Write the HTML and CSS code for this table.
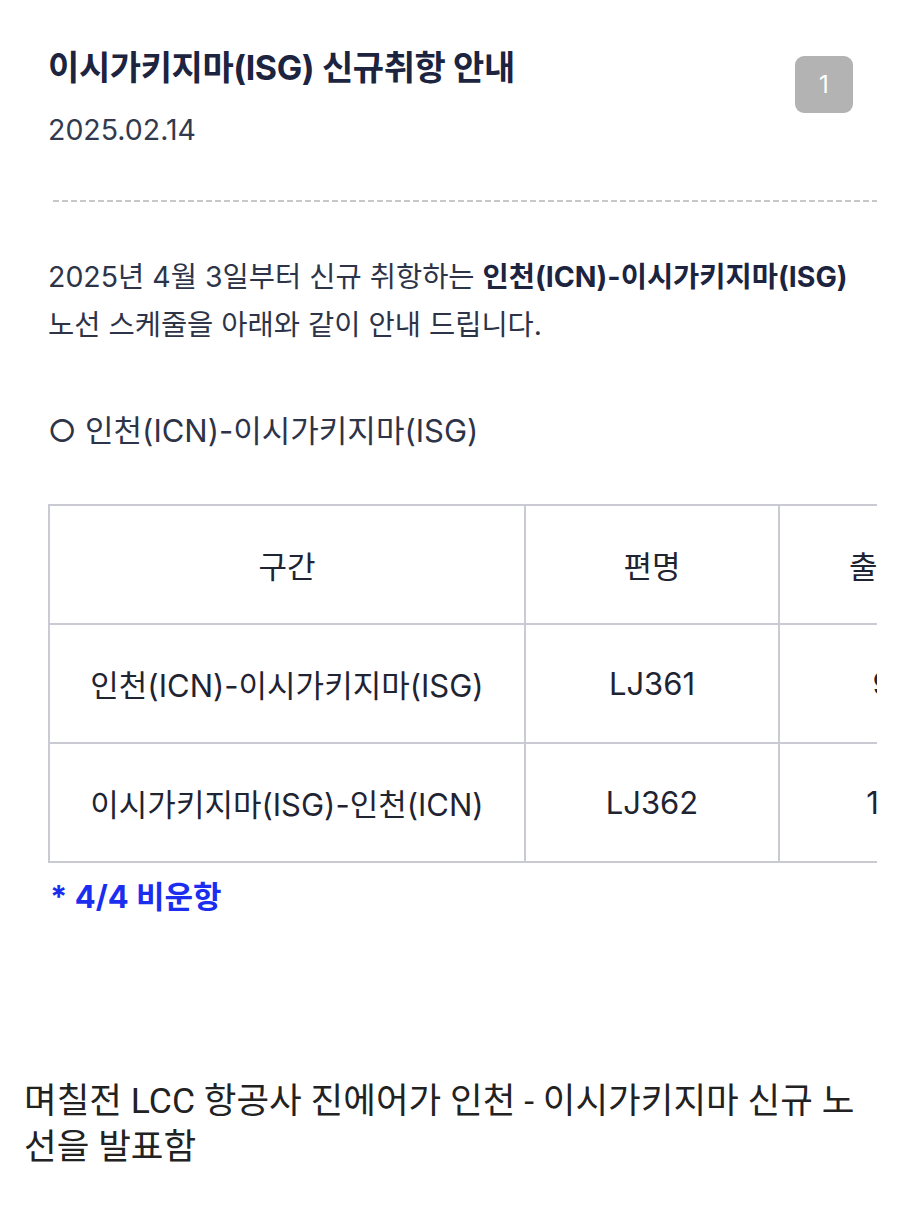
FILE: index.html
```html
<!DOCTYPE html>
<html lang="ko">
<head>
<meta charset="utf-8">
<link rel="stylesheet" href="styles.css">
</head>
<body>
<div class="shot">
  <header class="head">
    <div class="head-text">
      <h1 class="title">이시가키지마(ISG) 신규취항 안내</h1>
      <div class="date">2025.02.14</div>
    </div>
    <div class="badge">1</div>
  </header>
  <div class="dash"></div>
  <p class="intro">2025년 4월 3일부터 신규 취항하는 <b>인천(ICN)-이시가키지마(ISG)</b><br>노선 스케줄을 아래와 같이 안내 드립니다.</p>
  <p class="route">○ 인천(ICN)-이시가키지마(ISG)</p>
  <div class="table-wrap">
    <table class="sched">
      <colgroup><col class="c1"><col class="c2"><col class="c3"></colgroup>
      <tr><th>구간</th><th>편명</th><th>출발시간</th></tr>
      <tr><td>인천(ICN)-이시가키지마(ISG)</td><td>LJ361</td><td>9:30</td></tr>
      <tr><td>이시가키지마(ISG)-인천(ICN)</td><td>LJ362</td><td>13:30</td></tr>
    </table>
  </div>
  <p class="note">* 4/4 비운항</p>
</div>
<p class="caption">며칠전 LCC 항공사 진에어가 인천 - 이시가키지마 신규 노선을 발표함</p>
</body>
</html>
```
FILE: styles.css
```css
* { box-sizing: border-box; }
html, body { margin: 0; padding: 0; background: #fff; }
body {
  width: 900px;
  font-family: Inter, "Noto Sans CJK KR", sans-serif;
  color: #2d3347;
}
.shot {
  width: 877px;
  overflow: hidden;
  padding: 0 0 0 48px;
}
.head {
  display: flex;
  justify-content: space-between;
  align-items: flex-start;
  padding-top: 47px;
}
.title {
  margin: 0;
  font-size: 34px;
  line-height: 42px;
  font-weight: 700;
  color: #1c2440;
  letter-spacing: -0.4px;
}
.date {
  margin-top: 21px;
  font-size: 28.5px;
  line-height: 40px;
  color: #333a4e;
}
.badge {
  margin-top: 9px;
  width: 58px;
  height: 57px;
  border-radius: 9px;
  background: #b3b3b3;
  color: #fff;
  font-size: 24px;
  display: flex;
  align-items: center;
  justify-content: center;
  margin-right: 24px;
}
.dash {
  margin: 50px 0 0 5px;
  height: 2px;
  background: repeating-linear-gradient(to right, #c8c8c8 0 6px, transparent 6px 9px);
}
.intro {
  margin: 51px 0 0;
  font-size: 28.5px;
  line-height: 48px;
  color: #2e3448;
}
.intro b { color: #1c2440; font-weight: 700; }
.route {
  margin: 58px 0 0;
  font-size: 31px;
  line-height: 48px;
  color: #2e3448;
}
.table-wrap {
  margin-top: 49px;
  width: 829px;
  overflow: hidden;
}
.sched {
  border-collapse: collapse;
  table-layout: fixed;
  width: 984px;
}
.c1 { width: 476px; }
.c2 { width: 254px; }
.c3 { width: 254px; }
.sched th, .sched td {
  border: 2px solid #cacad3;
  text-align: center;
  font-size: 31px;
  font-weight: 400;
  color: #1f2433;
  padding: 0;
}
.sched tr { height: 119px; }
.note {
  margin: 14px 0 0 2px;
  font-size: 31px;
  line-height: 40px;
  font-weight: 700;
  color: #1b2ef0;
}
.caption {
  margin: 161px 24px 0;
  font-family: Roboto, "Noto Sans CJK KR", sans-serif;
  font-size: 35.5px;
  line-height: 46px;
  color: #222;
  word-break: break-all;
}
```
